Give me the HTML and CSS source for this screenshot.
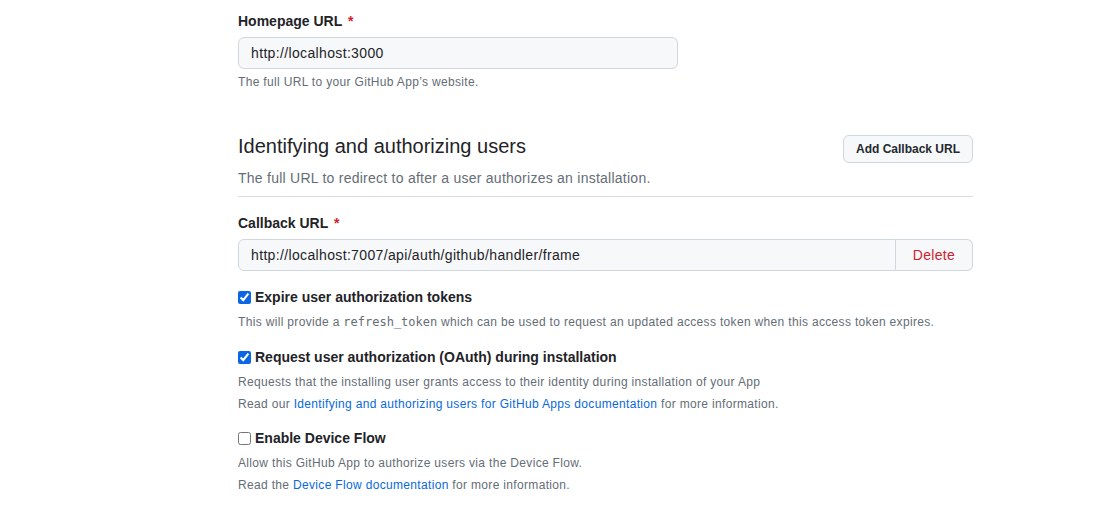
FILE: index.html
```html
<!DOCTYPE html>
<html lang="en">
<head>
<meta charset="utf-8">
<title>GitHub App settings</title>
<link rel="stylesheet" href="styles.css">
</head>
<body>
<main class="page">
  <div class="field">
    <label class="label" for="homepage">Homepage URL <span class="req">*</span></label>
    <input id="homepage" class="input input-short" type="text" value="http://localhost:3000">
    <p class="note">The full URL to your GitHub App’s website.</p>
  </div>

  <section class="section">
    <div class="section-head">
      <div class="section-titles">
        <h2 class="section-title">Identifying and authorizing users</h2>
        <p class="section-desc">The full URL to redirect to after a user authorizes an installation.</p>
      </div>
      <button class="btn" type="button">Add Callback URL</button>
    </div>

    <div class="field field-cb">
      <label class="label" for="callback">Callback URL <span class="req">*</span></label>
      <div class="input-group">
        <input id="callback" class="input input-grouped" type="text" value="http://localhost:7007/api/auth/github/handler/frame">
        <button class="btn-delete" type="button">Delete</button>
      </div>
    </div>

    <div class="check check-first">
      <label class="check-label"><input type="checkbox" checked> Expire user authorization tokens</label>
      <p class="note">This will provide a <code>refresh_token</code> which can be used to request an updated access token when this access token expires.</p>
    </div>

    <div class="check">
      <label class="check-label"><input type="checkbox" checked> Request user authorization (OAuth) during installation</label>
      <p class="note">Requests that the installing user grants access to their identity during installation of your App</p>
      <p class="note">Read our <a href="#">Identifying and authorizing users for GitHub Apps documentation</a> for more information.</p>
    </div>

    <div class="check check-last">
      <label class="check-label"><input type="checkbox"> Enable Device Flow</label>
      <p class="note">Allow this GitHub App to authorize users via the Device Flow.</p>
      <p class="note">Read the <a href="#">Device Flow documentation</a> for more information.</p>
    </div>
  </section>
</main>
</body>
</html>
```

FILE: styles.css
```css
* { box-sizing: border-box; }
html, body { margin: 0; padding: 0; background: #ffffff; }
body {
  font-family: "Liberation Sans", Arial, sans-serif;
  color: #1f2328;
  font-size: 14px;
  line-height: 20px;
}
.page {
  width: 735px;
  margin-left: 238px;
  padding-top: 11px;
}
.field { display: flex; flex-direction: column; align-items: flex-start; }
.label {
  font-weight: 600;
  font-size: 14px;
  line-height: 20px;
  margin-bottom: 6px;
}
.req { color: #cf222e; margin-left: 2px; }
.input {
  height: 32px;
  padding: 0 12px;
  font-family: inherit;
  font-size: 14px;
  letter-spacing: 0.35px;
  color: #1f2328;
  background: #f6f8fa;
  border: 1px solid #d0d7de;
  border-radius: 6px;
  outline: none;
}
.input-short { width: 440px; }
.note {
  margin: 4px 0 0;
  font-size: 12px;
  line-height: 18px;
  letter-spacing: 0.33px;
  color: #656d76;
}
.note a { color: #0969da; text-decoration: none; }
.note code {
  font-family: "DejaVu Sans Mono", "Liberation Mono", monospace;
  font-size: 12px;
  letter-spacing: 0;
  color: #656d76;
}
.section { margin-top: 40px; }
.section-head {
  display: flex;
  justify-content: space-between;
  align-items: flex-start;
  border-bottom: 1px solid #d8dee4;
  padding-bottom: 8px;
}
.section-title {
  margin: 0;
  font-size: 20px;
  line-height: 30px;
  font-weight: 400;
}
.section-desc {
  margin: 7px 0 0;
  font-size: 14px;
  line-height: 20px;
  letter-spacing: 0.25px;
  color: #656d76;
}
.btn {
  margin-top: 4px;
  height: 28px;
  padding: 0 12px;
  font-family: inherit;
  font-size: 12px;
  font-weight: 600;
  color: #24292f;
  background: #f6f8fa;
  border: 1px solid #d0d7de;
  border-radius: 6px;
}
.field-cb { margin-top: 16px; }
.input-group { display: flex; width: 100%; }
.input-grouped {
  flex: 1;
  border-top-right-radius: 0;
  border-bottom-right-radius: 0;
}
.btn-delete {
  width: 77px;
  height: 32px;
  font-family: inherit;
  font-size: 14px;
  font-weight: 400;
  letter-spacing: 0.3px;
  color: #cf222e;
  background: #f6f8fa;
  border: 1px solid #d0d7de;
  border-left: 0;
  border-radius: 0 6px 6px 0;
}
.check { margin-top: 16px; }
.check-first { margin-top: 16px; }
.check-last { margin-top: 15px; }
.check-label {
  display: flex;
  align-items: center;
  font-weight: 600;
  font-size: 14px;
  line-height: 20px;
}
.check-label input {
  margin: 0 4px 0 0;
  width: 13px;
  height: 13px;
  accent-color: #0a66e4;
}
.check .note { margin-top: 4px; }
.check .note:first-of-type { margin-top: 6px; }
```
